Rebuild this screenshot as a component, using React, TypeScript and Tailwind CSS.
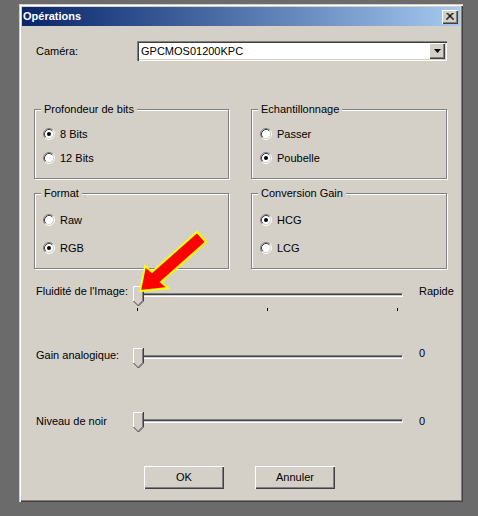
import React from "react";

const raised =
  "bg-[#d4d0c8] shadow-[inset_1px_1px_0_#fff,inset_-1px_-1px_0_#404040,inset_-2px_-2px_0_#808080]";

function Radio({ checked, label }: { checked?: boolean; label: string }) {
  return (
    <div className="flex h-[16px] items-center pl-[8px]">
      <svg width="12" height="12" viewBox="0 0 12 12" className="shrink-0">
        <circle cx="6" cy="6" r="4.5" fill="#fff" />
        <path d="M2.11 9.89 A5.5 5.5 0 0 1 9.89 2.11" fill="none" stroke="#808080" strokeWidth="1" />
        <path d="M9.89 2.11 A5.5 5.5 0 0 1 2.11 9.89" fill="none" stroke="#fff" strokeWidth="1" />
        <path d="M2.82 9.18 A4.5 4.5 0 0 1 9.18 2.82" fill="none" stroke="#404040" strokeWidth="1" />
        <path d="M9.18 2.82 A4.5 4.5 0 0 1 2.82 9.18" fill="none" stroke="#d4d0c8" strokeWidth="1" />
        {checked && <circle cx="6" cy="6" r="2" fill="#000" />}
      </svg>
      <span className="ml-[5px] leading-[13px]">{label}</span>
    </div>
  );
}

function Group({
  title,
  width,
  height,
  children,
  top,
  gap,
}: {
  title: string;
  width: string;
  height: string;
  top: string;
  gap: string;
  children: React.ReactNode;
}) {
  return (
    <div
      className={`${width} ${height} flex flex-col border border-[#808080] shadow-[1px_1px_0_#fff,inset_1px_1px_0_#fff]`}
    >
      <span className="-mt-[7px] ml-[6px] w-fit bg-[#d4d0c8] px-[3px] leading-[13px]">{title}</span>
      <div className={`flex flex-col ${top} ${gap}`}>{children}</div>
    </div>
  );
}

function Thumb() {
  return (
    <svg width="11" height="21" viewBox="0 0 11 21" className="absolute left-0 top-[2px]">
      <polygon points="0.5,0.5 10.5,0.5 10.5,15 5.5,20 0.5,15" fill="#d4d0c8" />
      <polyline points="0.5,15 0.5,0.5 9.5,0.5" fill="none" stroke="#fff" strokeWidth="1" />
      <polyline points="10.5,0 10.5,15 5.5,20 0.5,15" fill="none" stroke="#404040" strokeWidth="1" />
      <polyline points="9.5,1 9.5,14.6 5.5,18.6" fill="none" stroke="#808080" strokeWidth="1" />
    </svg>
  );
}

function Track() {
  return (
    <div className="mt-[9px] h-[4px] w-[270px] border-l border-t border-l-[#808080] border-t-[#808080] border-r border-b border-r-[#fff] border-b-[#fff] shadow-[inset_1px_1px_0_#404040] bg-[#d4d0c8]" />
  );
}

function Slider({
  label,
  value,
  labelTop,
  valueTop,
  ticks,
}: {
  label: string;
  value: string;
  labelTop: string;
  valueTop: string;
  ticks?: boolean;
}) {
  return (
    <div className="flex items-start">
      <span className={`ml-[14px] w-[97px] leading-[14px] ${labelTop}`}>{label}</span>
      <div className="flex w-[270px] flex-col">
        <div className="relative h-[22px]">
          <Track />
          <Thumb />
        </div>
        {ticks && (
          <div className="mt-[2px] flex justify-between pl-[4px] pr-[5px]">
            <div className="h-[3px] w-px bg-black" />
            <div className="h-[3px] w-px bg-black" />
            <div className="h-[3px] w-px bg-black" />
          </div>
        )}
      </div>
      <span className={`ml-[16px] leading-[14px] ${valueTop}`}>{value}</span>
    </div>
  );
}

export default function App() {
  return (
    <div className="relative h-[516px] w-[478px] overflow-hidden bg-[#6b6b6b] pt-[4px] pl-[19px] font-['Liberation_Sans',Arial,sans-serif] text-[11px] text-black">
      <div className="flex h-[498px] w-[444px] flex-col bg-[#d4d0c8] p-[3px] shadow-[inset_1px_1px_0_#d4d0c8,inset_2px_2px_0_#fff,inset_-1px_-1px_0_#404040,inset_-2px_-2px_0_#808080]">
        {/* title bar */}
        <div className="flex h-[19px] items-center justify-between bg-gradient-to-r from-[#0a246a] to-[#a6caf0] pl-[1px] pr-[2px]">
          <span className="text-[11px] font-bold text-white">Opérations</span>
          <div className={`flex h-[14px] w-[16px] items-center justify-center ${raised}`}>
            <svg width="8" height="7" viewBox="0 0 8 7">
              <path d="M0.5 0 L7.5 7 M1.5 0 L8 6.5 M7.5 0 L0.5 7 M6.5 0 L0 6.5" stroke="#000" strokeWidth="1" />
            </svg>
          </div>
        </div>

        {/* camera */}
        <div className="mt-[15px] flex h-[20px] items-center">
          <span className="ml-[14px] w-[101px]">Caméra:</span>
          <div className="flex h-[20px] w-[310px] items-center justify-between bg-white pl-[4px] pr-[2px] shadow-[inset_1px_1px_0_#808080,inset_2px_2px_0_#404040,inset_-1px_-1px_0_#fff,inset_-2px_-2px_0_#d4d0c8]">
            <span className="leading-[13px]">GPCMOS01200KPC</span>
            <div className={`flex h-[16px] w-[16px] items-center justify-center ${raised}`}>
              <svg width="7" height="4" viewBox="0 0 7 4">
                <polygon points="0,0 7,0 3.5,4" fill="#000" />
              </svg>
            </div>
          </div>
        </div>

        {/* groups */}
        <div className="mt-[48px] flex gap-[22px] pl-[12px]">
          <Group title="Profondeur de bits" width="w-[195px]" height="h-[70px]" top="mt-[10px]" gap="gap-[8px]">
            <Radio checked label="8 Bits" />
            <Radio label="12 Bits" />
          </Group>
          <Group title="Echantillonnage" width="w-[196px]" height="h-[70px]" top="mt-[10px]" gap="gap-[8px]">
            <Radio label="Passer" />
            <Radio checked label="Poubelle" />
          </Group>
        </div>
        <div className="mt-[14px] flex gap-[22px] pl-[12px]">
          <Group title="Format" width="w-[195px]" height="h-[76px]" top="mt-[12px]" gap="gap-[12px]">
            <Radio label="Raw" />
            <Radio checked label="RGB" />
          </Group>
          <Group title="Conversion Gain" width="w-[196px]" height="h-[76px]" top="mt-[12px]" gap="gap-[12px]">
            <Radio checked label="HCG" />
            <Radio label="LCG" />
          </Group>
        </div>

        {/* sliders */}
        <div className="mt-[15px]">
          <Slider label="Fluidité de l'Image:" value="Rapide" labelTop="mt-0" valueTop="mt-0" ticks />
        </div>
        <div className="mt-[35px]">
          <Slider label="Gain analogique:" value="0" labelTop="mt-[2px]" valueTop="mt-0" />
        </div>
        <div className="mt-[42px]">
          <Slider label="Niveau de noir" value="0" labelTop="mt-[4px]" valueTop="mt-[4px]" />
        </div>

        {/* buttons */}
        <div className="mt-[34px] flex gap-[31px] pl-[122px]">
          <button className={`h-[23px] w-[80px] ${raised}`}>OK</button>
          <button className={`h-[23px] w-[80px] ${raised}`}>Annuler</button>
        </div>
      </div>

      {/* annotation arrow */}
      <svg className="pointer-events-none absolute left-0 top-0" width="478" height="516" viewBox="0 0 478 516">
        <polygon
          points="140,291 145,266 152,272 197,232 206,242 161,282 168,288"
          fill="#ff0000"
          stroke="#ffff00"
          strokeWidth="2"
          strokeLinejoin="miter"
        />
      </svg>
    </div>
  );
}
